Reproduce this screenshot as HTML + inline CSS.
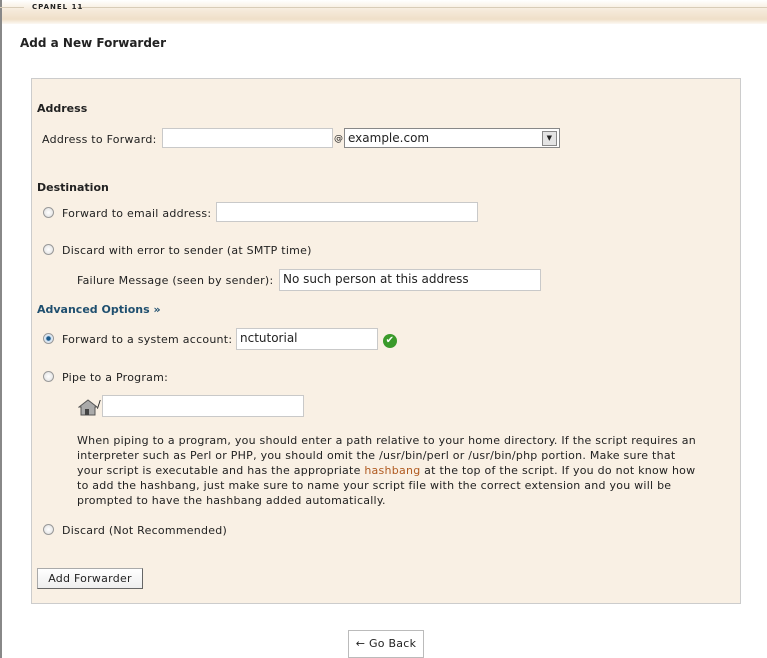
<!DOCTYPE html>
<html><head><style>
body{margin:0;width:767px;height:658px;background:#fff;font-family:Verdana,"DejaVu Sans",sans-serif;font-size:11px;color:#222;position:relative;overflow:hidden;letter-spacing:0.25px}
.abs{position:absolute}
.top{left:0;top:0;width:767px;height:24px;background:linear-gradient(#fff 0%,#f6ebdc 40%,#efdfc8 80%,#fdf9f3 100%)}
.inp{position:absolute;background:#fff;border:1px solid #c9c9c9;height:20px;box-sizing:border-box;font-size:12px;padding:2px 3px;font-family:"DejaVu Sans",sans-serif;letter-spacing:0}
.rad{position:absolute;width:11px;height:11px;border-radius:50%;border:1px solid #999;background:radial-gradient(#fff,#ddd);box-sizing:border-box}
.t{position:absolute;white-space:nowrap}
b.t{font-weight:bold;letter-spacing:0}
</style></head><body>
<div class="abs top"></div>
<div class="abs" style="left:0;top:0;width:2px;height:658px;background:#888"></div>
<div class="abs" style="left:0;top:7px;width:24px;height:1px;background:#d8ccb8"></div>
<div class="abs" style="left:77px;top:7px;width:690px;height:1px;background:#d8ccb8"></div>
<div class="t" style="left:32px;top:3px;font-size:7px;font-weight:bold;letter-spacing:1px">CPANEL 11</div>
<b class="t" style="left:20px;top:36px;font-size:12px">Add a New Forwarder</b>
<div class="abs" style="left:31px;top:78px;width:710px;height:526px;background:#f9f0e4;border:1px solid #ccc;box-sizing:border-box"></div>
<b class="t" style="left:37px;top:102px">Address</b>
<div class="t" style="left:42px;top:133px">Address to Forward:</div>
<div class="inp" style="left:162px;top:128px;width:171px"></div>
<div class="t" style="left:334px;top:134px;font-size:9px">@</div>
<div class="inp" style="left:344px;top:128px;width:216px;border-color:#888">example.com</div>
<div class="abs" style="left:542px;top:131px;width:15px;height:15px;background:#e4e4e4;border:1px solid #888;box-sizing:border-box;font-size:7px;text-align:center;line-height:13px">▼</div>
<b class="t" style="left:37px;top:181px">Destination</b>
<div class="rad" style="left:43px;top:207px"></div>
<div class="t" style="left:62px;top:207px">Forward to email address:</div>
<div class="inp" style="left:216px;top:202px;width:262px"></div>
<div class="rad" style="left:43px;top:244px"></div>
<div class="t" style="left:62px;top:244px">Discard with error to sender (at SMTP time)</div>
<div class="t" style="left:77px;top:274px">Failure Message (seen by sender):</div>
<div class="inp" style="left:279px;top:269px;width:262px;height:22px">No such person at this address</div>
<b class="t" style="left:37px;top:303px;color:#1f4f6f">Advanced Options »</b>
<div class="rad" style="left:43px;top:333px;background:radial-gradient(#1a5a8a 30%,#cde 40%,#fff)"></div>
<div class="t" style="left:62px;top:333px">Forward to a system account:</div>
<div class="inp" style="left:236px;top:328px;width:142px;height:22px">nctutorial</div>
<div class="abs" style="left:383px;top:334px;width:14px;height:14px;border-radius:50%;background:#3a9a2a;color:#fff;font-size:10px;text-align:center;line-height:14px">✔</div>
<div class="rad" style="left:43px;top:371px"></div>
<div class="t" style="left:62px;top:371px">Pipe to a Program:</div>
<svg class="abs" style="left:78px;top:398px" width="20" height="18" viewBox="0 0 20 18"><path d="M1 9 L10 2 L19 9 L17 9 L17 17 L3 17 L3 9 Z" fill="#aaa" stroke="#555"/><rect x="7" y="11" width="4" height="6" fill="#444"/></svg>
<div class="t" style="left:97px;top:398px">/</div>
<div class="inp" style="left:102px;top:395px;width:202px;height:22px"></div>
<div class="abs" style="left:77px;top:433px;width:622px;line-height:15px">When piping to a program, you should enter a path relative to your home directory. If the script requires an interpreter such as Perl or PHP, you should omit the /usr/bin/perl or /usr/bin/php portion. Make sure that your script is executable and has the appropriate <span style="color:#b05a20">hashbang</span> at the top of the script. If you do not know how to add the hashbang, just make sure to name your script file with the correct extension and you will be prompted to have the hashbang added automatically.</div>
<div class="rad" style="left:43px;top:524px"></div>
<div class="t" style="left:62px;top:524px">Discard (Not Recommended)</div>
<div class="abs" style="left:37px;top:568px;width:106px;height:21px;background:linear-gradient(#fff,#eee);border:1px solid #aaa;border-right-color:#666;border-bottom-color:#666;box-sizing:border-box;text-align:center;line-height:19px">Add Forwarder</div>
<div class="abs" style="left:348px;top:630px;width:76px;height:28px;background:#fff;border:1px solid #bbb;box-sizing:border-box;text-align:center;line-height:26px">← Go Back</div>
</body></html>
